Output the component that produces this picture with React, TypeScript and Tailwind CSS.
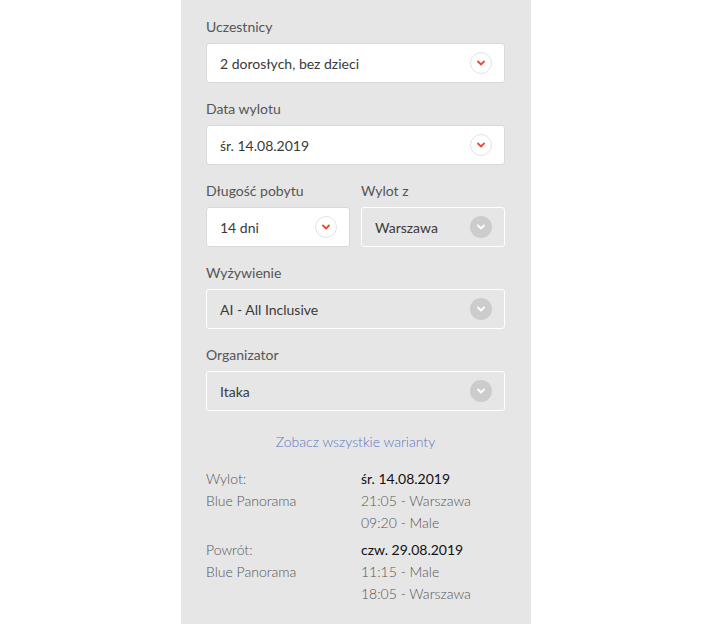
import React from 'react';

const Chevron = ({ active }: { active: boolean }) => (
  <span
    className={
      active
        ? 'flex h-[22px] w-[22px] items-center justify-center rounded-full border border-[#e3e3e3] bg-white'
        : 'flex h-[22px] w-[22px] items-center justify-center rounded-full bg-[#cccccc]'
    }
  >
    <svg width="8" height="6" viewBox="0 0 8 6" fill="none">
      <path
        d="M1 1.5 L4 4.5 L7 1.5"
        stroke={active ? '#ec4a2c' : '#ffffff'}
        strokeWidth="1.8"
        strokeLinecap="round"
        strokeLinejoin="round"
      />
    </svg>
  </span>
);

const Select = ({ value, active = true }: { value: string; active?: boolean }) => (
  <div
    className={
      active
        ? 'flex h-10 items-center justify-between rounded-[3px] border border-[#d9d9d9] bg-white pl-[13px] pr-3'
        : 'flex h-10 items-center justify-between rounded-[3px] border border-white bg-[#e6e6e6] pl-[13px] pr-3'
    }
  >
    <span className="text-[14px] text-[#3a3a3a]">{value}</span>
    <Chevron active={active} />
  </div>
);

const Field = ({ label, children }: { label: string; children: React.ReactNode }) => (
  <div className="flex flex-col">
    <label className="mb-[6px] h-5 text-[14px] leading-5 text-[#555]">{label}</label>
    {children}
  </div>
);

export default function App() {
  return (
    <div className="flex min-h-[632px] justify-center bg-white font-['Lato',sans-serif]">
      <div className="ml-[1px] flex w-[350px] flex-col gap-4 self-start bg-[#e6e6e6] pb-[19px] pl-[25px] pr-[26px] pt-[17px]">
        <Field label="Uczestnicy">
          <Select value="2 dorosłych, bez dzieci" />
        </Field>
        <Field label="Data wylotu">
          <Select value="śr. 14.08.2019" />
        </Field>
        <div className="grid grid-cols-2 gap-[11px]">
          <Field label="Długość pobytu">
            <Select value="14 dni" />
          </Field>
          <Field label="Wylot z">
            <Select value="Warszawa" active={false} />
          </Field>
        </div>
        <Field label="Wyżywienie">
          <Select value="AI - All Inclusive" active={false} />
        </Field>
        <Field label="Organizator">
          <Select value="Itaka" active={false} />
        </Field>

        <a className="mt-[5px] text-center text-[14px] font-light leading-5 text-[#5a77c2]">
          Zobacz wszystkie warianty
        </a>

        <div className="flex flex-col gap-[5px] text-[14px] font-light leading-[22px] text-[#555]">
          <div className="grid grid-cols-[155px_1fr]">
            <div>
              <div>Wylot:</div>
              <div>Blue Panorama</div>
            </div>
            <div>
              <div className="font-normal text-[#111]">śr. 14.08.2019</div>
              <div>21:05 - Warszawa</div>
              <div>09:20 - Male</div>
            </div>
          </div>
          <div className="grid grid-cols-[155px_1fr]">
            <div>
              <div>Powrót:</div>
              <div>Blue Panorama</div>
            </div>
            <div>
              <div className="font-normal text-[#111]">czw. 29.08.2019</div>
              <div>11:15 - Male</div>
              <div>18:05 - Warszawa</div>
            </div>
          </div>
        </div>
      </div>
    </div>
  );
}
